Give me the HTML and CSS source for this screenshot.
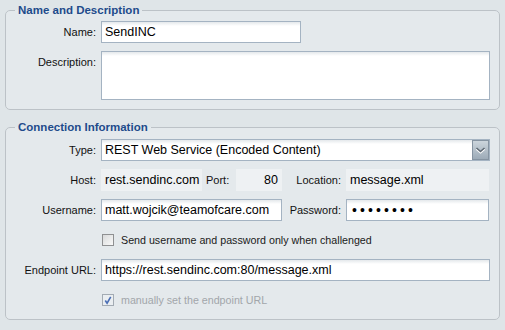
FILE: index.html
```html
<!DOCTYPE html>
<html lang="en">
<head>
    <meta charset="UTF-8">
    <title>Endpoint Settings</title>
    <link rel="stylesheet" href="styles.css">
</head>
<body>
  <fieldset class="group first">
      <legend>Name and Description</legend>
      <div class="row">
          <label class="lbl">Name:</label>
          <input class="field name" type="text" value="SendINC">
      </div>
      <div class="row top">
          <label class="lbl">Description:</label>
          <textarea class="field desc"></textarea>
      </div>
  </fieldset>

  <fieldset class="group second">
      <legend>Connection Information</legend>
      <div class="row">
          <label class="lbl">Type:</label>
          <div class="field select">
              <span class="select-text">REST Web Service (Encoded Content)</span>
              <span class="arrow">
                  <svg width="17" height="20" viewBox="0 0 17 20">
                      <polyline points="4.5,9 8.5,12.5 12.5,9" fill="none" stroke="#ffffff" stroke-width="2"/>
                      <polyline points="4.5,8 8.5,11.5 12.5,8" fill="none" stroke="#5d6873" stroke-width="1.6"/>
                  </svg>
              </span>
          </div>
      </div>
      <div class="row">
          <label class="lbl">Host:</label>
          <div class="static host">rest.sendinc.com</div>
          <label class="lbl-inline">Port:</label>
          <div class="static port">80</div>
          <label class="lbl2">Location:</label>
          <div class="static location">message.xml</div>
      </div>
      <div class="row">
          <label class="lbl">Username:</label>
          <input class="field user" type="text" value="matt.wojcik@teamofcare.com">
          <label class="lbl2">Password:</label>
          <div class="field pass"><span class="dots">&bull;&bull;&bull;&bull;&bull;&bull;&bull;&bull;</span></div>
      </div>
      <div class="row">
          <span class="lbl"></span>
          <span class="check"></span>
          <span class="check-text">Send username and password only when challenged</span>
      </div>
      <div class="row">
          <label class="lbl">Endpoint URL:</label>
          <input class="field url" type="text" value="https://rest.sendinc.com:80/message.xml">
      </div>
      <div class="row">
          <span class="lbl"></span>
          <span class="check disabled">
              <svg width="11" height="11" viewBox="0 0 11 11">
                  <polyline points="2.5,5.5 4.5,8.5 8.5,1.5" fill="none" stroke="#4b6fb5" stroke-width="1.8"/>
              </svg>
          </span>
          <span class="check-text muted">manually set the endpoint URL</span>
      </div>
  </fieldset>
</body>
</html>
```

FILE: styles.css
```css
*{
   box-sizing: border-box;
}

body{
   margin: 0;
   padding-top: 4px;
   background: #dfe5e8;
   font-family: 'Liberation Sans', Arial, sans-serif;
   font-size: 11px;
   color: #111;
}

.group{
   width: 495px;
   margin: 0 0 0 5px;
   padding: 4px 0 8px 0;
   border: 1px solid #bcc2c7;
   border-radius: 5px;
   background: #e4e9ec;
}

.first{
   padding-bottom: 9px;
}

.second{
   margin-top: 11px;
   padding-top: 5px;
}

legend{
   margin-left: 9px;
   padding: 0 3px;
   font-size: 11.5px;
   font-weight: bold;
   line-height: 13px;
   color: #1e4b8b;
}

.row{
   display: flex;
   align-items: center;
   height: 22px;
   margin-top: 8px;
}

.row:first-of-type{
   margin-top: 0;
}

.row.top{
   align-items: flex-start;
   height: auto;
}

.lbl{
   width: 90px;
   margin-right: 5px;
   text-align: right;
}

.row.top .lbl{
   padding-top: 5px;
}

.field{
   height: 22px;
   border: 1px solid #a4b3c2;
   background: linear-gradient(#e4e8eb 0, #ffffff 4px);
   font-family: 'Liberation Sans', Arial, sans-serif;
   font-size: 12.5px;
   color: #000;
   padding: 0 3px;
   outline: none;
}

.name{
   width: 200px;
}

.desc{
   width: 389px;
   height: 49px;
   resize: none;
}

.select{
   width: 389px;
   display: flex;
   align-items: center;
   justify-content: space-between;
   padding-right: 0;
}

.arrow{
   width: 17px;
   height: 20px;
   border: 1px solid #8694a2;
   background: linear-gradient(#ccd5dc, #9dabb8);
   display: flex;
}

.arrow svg{
   margin: -1px;
}

.static{
   height: 22px;
   line-height: 22px;
   background: #eef1f3;
   font-size: 12.5px;
   color: #000;
   padding: 0 4px;
}

.host{
   width: 101px;
}

.lbl-inline{
   width: 34px;
   padding-left: 4px;
}

.port{
   width: 46px;
   text-align: right;
}

.lbl2{
   width: 59px;
   margin-right: 5px;
   text-align: right;
}

.location{
   width: 143px;
}

.user{
   width: 181px;
}

.pass{
   width: 143px;
   display: flex;
   align-items: center;
   padding-left: 5px;
}

.dots{
   font-size: 14px;
   letter-spacing: 3.1px;
   line-height: 10px;
}

.check{
   width: 12px;
   height: 12px;
   margin-left: 1px;
   border: 1px solid #8f9092;
   background: linear-gradient(135deg, #d9dadb, #f9f9f9);
   display: flex;
   align-items: center;
   justify-content: center;
}

.check.disabled{
   border-color: #a3abb3;
   background: #eaeef1;
}

.check-text{
   margin-left: 7px;
   font-size: 10.7px;
   color: #1a1a1a;
}

.check-text.muted{
   color: #a2a6aa;
}

.url{
   width: 389px;
}
```
